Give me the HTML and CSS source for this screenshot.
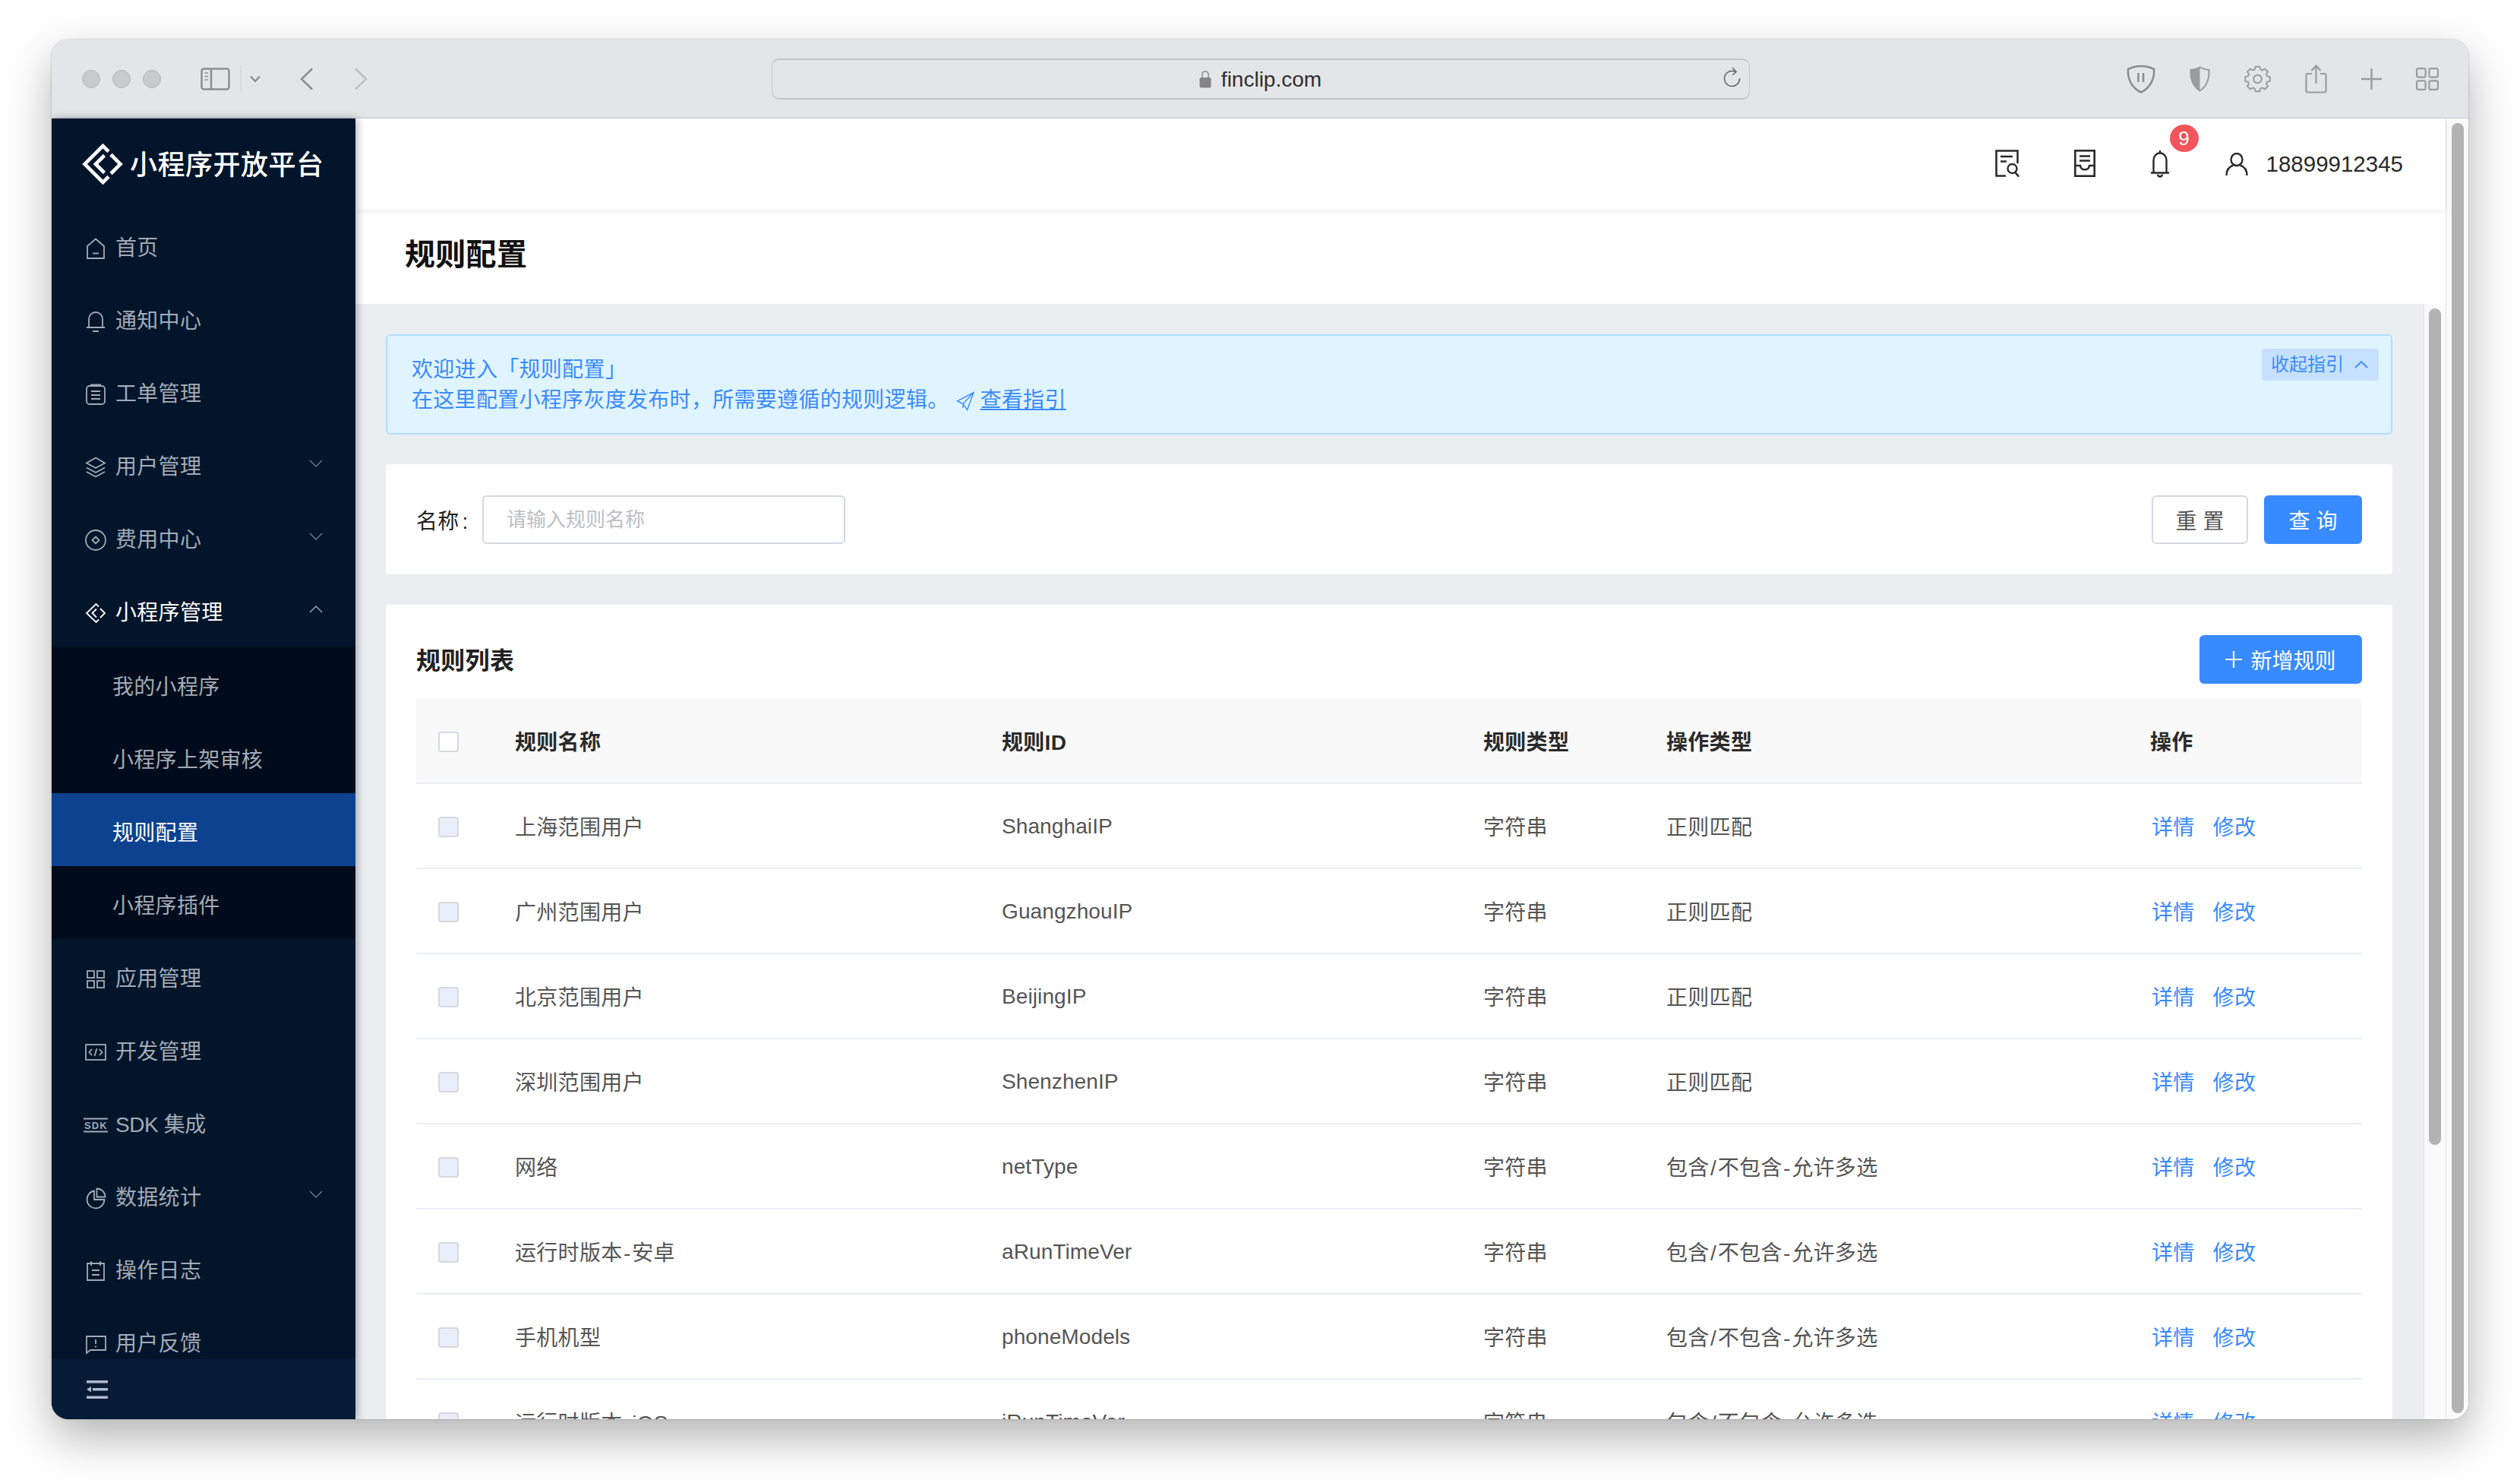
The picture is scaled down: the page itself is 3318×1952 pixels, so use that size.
FILE: index.html
```html
<!DOCTYPE html>
<html lang="zh-CN">
<head>
  <meta charset="utf-8">
  <title>规则配置</title>
  <link rel="stylesheet" href="styles.css">
</head>
<body>
<div class="window">
  <div class="titlebar">
    <div class="tb-left">
      <span class="light"></span><span class="light"></span><span class="light"></span>
      <svg class="tb-sidebar" width="80" height="38" viewBox="0 0 80 38" fill="none">
        <rect x="1.5" y="5.5" width="36" height="27" rx="3" stroke="#8d8e91" stroke-width="2.5"/>
        <path d="M14 5.5V32.5" stroke="#8d8e91" stroke-width="2.5"/>
        <path d="M5.5 11H10M5.5 15.5H10M5.5 20H10" stroke="#8d8e91" stroke-width="1.6"/>
        <path d="M53 1V37" stroke="#cfd0d3" stroke-width="1"/>
        <path d="M66 15.5L72 22L78 15.5" stroke="#8d8e91" stroke-width="2.4"/>
      </svg>
      <svg class="tb-back" width="18" height="30" viewBox="0 0 18 30" fill="none"><path d="M16 1.5L2 15L16 28.5" stroke="#8d8e91" stroke-width="2.6"/></svg>
      <svg class="tb-forward" width="18" height="30" viewBox="0 0 18 30" fill="none"><path d="M2 1.5L16 15L2 28.5" stroke="#c0c1c4" stroke-width="2.6"/></svg>
    </div>
    <div class="urlbar">
      <svg width="16" height="24" viewBox="0 0 16 24" fill="none"><path d="M4 11V6a4 4 0 0 1 8 0v5" stroke="#8a8a8c" stroke-width="1.6"/><rect x="0.5" y="10" width="15" height="13.5" rx="2" fill="#858587"/></svg>
      <span class="url-text">finclip.com</span>
      <svg class="url-reload" width="24" height="28" viewBox="0 0 24 28" fill="none"><path d="M16 6.5A10 10 0 1 0 21.5 15" stroke="#6a6a6c" stroke-width="1.6"/><path d="M12 1L17 6.5L12 11" stroke="#6a6a6c" stroke-width="1.6"/></svg>
    </div>
    <div class="tb-right">
      <svg width="38" height="38" viewBox="0 0 38 38" fill="none"><path d="M19 2C25 2 31 3.5 36 6C37 18 32 30 19 36.5C6 30 1 18 2 6C7 3.5 13 2 19 2Z" stroke="#8d8e91" stroke-width="2.6"/><path d="M15.5 11V23M22 11V23" stroke="#8d8e91" stroke-width="2.6"/></svg>
      <svg width="27" height="34" viewBox="0 0 27 34" fill="none"><path d="M13.5 1.5C17 3.5 21 4.5 25.5 5C26 17 22 27 13.5 32.5C5 27 1 17 1.5 5C6 4.5 10 3.5 13.5 1.5Z" stroke="#9a9b9e" stroke-width="2"/><path d="M13.5 1.5C10 3.5 6 4.5 1.5 5C1 17 5 27 13.5 32.5Z" fill="#9a9b9e"/></svg>
      <svg width="35" height="36" viewBox="0 0 36 36" fill="none" stroke="#9a9b9e" stroke-width="2" stroke-linejoin="round"><path d="M14.28 5.02L15.05 1.26H20.95L21.72 5.02L24.55 6.19L27.75 4.07L31.93 8.25L29.81 11.45L30.98 14.28L34.74 15.05V20.95L30.98 21.72L29.81 24.55L31.93 27.75L27.75 31.93L24.55 29.81L21.72 30.98L20.95 34.74H15.05L14.28 30.98L11.45 29.81L8.25 31.93L4.07 27.75L6.19 24.55L5.02 21.72L1.26 20.95V15.05L5.02 14.28L6.19 11.45L4.07 8.25L8.25 4.07L11.45 6.19Z"/><circle cx="18" cy="18" r="5.5"/></svg>
      <svg width="29" height="38" viewBox="0 0 29 38" fill="none"><path d="M9 12H3.5A2 2 0 0 0 1.5 14V34.5A2 2 0 0 0 3.5 36.500H25.500A2 2 0 0 0 27.500 34.500V14A2 2 0 0 0 25.500 12H20" stroke="#9a9b9e" stroke-width="2.200"/><path d="M14.500 25V2M8.500 8L14.500 1.500L20.500 8" stroke="#9a9b9e" stroke-width="2.200"/></svg>
      <svg width="27" height="28" viewBox="0 0 27 28" fill="none"><path d="M13.500 0V28M0 14H27" stroke="#9a9b9e" stroke-width="2.400"/></svg>
      <svg width="30" height="30" viewBox="0 0 30 30" fill="none" stroke="#9a9b9e" stroke-width="2.200"><rect x="1.100" y="1.100" width="11.500" height="11.500" rx="2"/><rect x="17.400" y="1.100" width="11.500" height="11.500" rx="2"/><rect x="1.100" y="17.400" width="11.500" height="11.500" rx="2"/><rect x="17.400" y="17.400" width="11.500" height="11.500" rx="2"/></svg>
    </div>
  </div>

  <div class="app">
    <aside class="sidebar">
      <div class="logo">
        <svg width="54" height="54" viewBox="0 0 54 54" fill="none" stroke="#fff" stroke-width="4.600">
          <path d="M35 10.500L27.500 3L3.500 27L27.500 51L35 43.500"/>
          <path d="M29.500 15.500L18 27L29.500 38.500"/>
          <path d="M38 14.500L50.500 27L38 39.500"/>
        </svg>
        <span>小程序开放平台</span>
      </div>
      <nav class="menu">
        <a class="menu-item">
          <svg class="mi" viewBox="0 0 28 28" fill="none"><path d="M3 11L14 1.500L25 11V27H3Z"/><path d="M10 20.500H18"/></svg>
          <span>首页</span>
        </a>
        <a class="menu-item">
          <svg class="mi" viewBox="0 0 28 28" fill="none"><path d="M5 22V11A9 9 0 0 1 23 11V22"/><path d="M2 22H26M10 27H18"/></svg>
          <span>通知中心</span>
        </a>
        <a class="menu-item">
          <svg class="mi" viewBox="0 0 28 28" fill="none"><rect x="2" y="3" width="24" height="24" rx="4"/><path d="M8 3V1.500H20V3M8 10H20M8 15H20M8 20H20"/></svg>
          <span>工单管理</span>
        </a>
        <a class="menu-item">
          <svg class="mi" viewBox="0 0 28 28" fill="none"><path d="M14 1.500L26 8.500L14 15L2 8.500Z"/><path d="M2 14.500L14 21L26 14.500M2 20L14 26.500L26 20"/></svg>
          <span>用户管理</span>
          <svg class="caret" viewBox="0 0 18 10" fill="none"><path d="M1 1L9 9L17 1"/></svg>
        </a>
        <a class="menu-item">
          <svg class="mi" viewBox="0 0 28 28" fill="none"><circle cx="14" cy="14" r="13"/><path d="M14 9.500L18.500 14L14 18.500L9.500 14Z"/></svg>
          <span>费用中心</span>
          <svg class="caret" viewBox="0 0 18 10" fill="none"><path d="M1 1L9 9L17 1"/></svg>
        </a>
        <a class="menu-item open">
          <svg class="mi" viewBox="0 0 28 28" fill="none"><path d="M18 5.500L14.500 2L2 14L14.500 26L18 22.500"/><path d="M15 8.500L9.500 14L15 19.500"/><path d="M20 8L26 14L20 20"/></svg>
          <span>小程序管理</span>
          <svg class="caret" viewBox="0 0 18 10" fill="none"><path d="M1 9L9 1L17 9"/></svg>
        </a>
        <div class="submenu">
          <a class="sub-item">我的小程序</a>
          <a class="sub-item">小程序上架审核</a>
          <a class="sub-item active">规则配置</a>
          <a class="sub-item">小程序插件</a>
        </div>
        <a class="menu-item">
          <svg class="mi" viewBox="0 0 28 28" fill="none"><rect x="3" y="3" width="9" height="9"/><rect x="16" y="3" width="9" height="9"/><rect x="3" y="16" width="9" height="9"/><rect x="16" y="16" width="9" height="9"/></svg>
          <span>应用管理</span>
        </a>
        <a class="menu-item">
          <svg class="mi" viewBox="0 0 28 28" fill="none"><rect x="1" y="4" width="26" height="20"/><path d="M9 10L5.500 14L9 18M19 10L22.500 14L19 18M15.500 9L12.500 19"/></svg>
          <span>开发管理</span>
        </a>
        <a class="menu-item">
          <svg class="mi mi-sdk" viewBox="0 0 32 28" fill="none"><path d="M0 5.500H32M0 22.500H32"/><text x="16" y="18.500" text-anchor="middle" textLength="30" class="sdk-text">SDK</text></svg>
          <span class="sdk-label">SDK 集成</span>
        </a>
        <a class="menu-item">
          <svg class="mi" viewBox="0 0 28 28" fill="none"><path d="M12 4.500A11.500 11.500 0 1 0 25.500 16H12Z"/><path d="M15.500 1.500A11 11 0 0 1 26.500 12.500H15.500Z"/></svg>
          <span>数据统计</span>
          <svg class="caret" viewBox="0 0 18 10" fill="none"><path d="M1 1L9 9L17 1"/></svg>
        </a>
        <a class="menu-item">
          <svg class="mi" viewBox="0 0 28 28" fill="none"><path d="M8 4H3V26H25V4H20M8 1V7M20 1V7M8 4H20M9 13H19M9 19H19"/></svg>
          <span>操作日志</span>
        </a>
        <a class="menu-item">
          <svg class="mi" viewBox="0 0 28 28" fill="none"><path d="M2 4H27V22H7L2 26Z"/><path d="M14 8V14M14 16.500V18.500"/></svg>
          <span>用户反馈</span>
        </a>
      </nav>
      <div class="collapse-bar">
        <svg width="28" height="24" viewBox="0 0 28 24"><path d="M0 0H28V3.500H0ZM8 10H28V13.500H8ZM0 20.500H28V24H0Z" fill="#b3bac6"/><path d="M0 11.800L6 8V15.500Z" fill="#b3bac6"/></svg>
      </div>
    </aside>

    <div class="main">
      <header class="topbar">
        <svg class="tp-icon" width="32" height="36" viewBox="0 0 32 36" fill="none"><path d="M14 34.500H1.500V1.500H29.500V18" stroke="#2a2a2a" stroke-width="2.600"/><path d="M7 9H23M7 15.500H15" stroke="#2a2a2a" stroke-width="2.600"/><circle cx="22.500" cy="25" r="6" stroke="#2a2a2a" stroke-width="2.400"/><path d="M26.500 30L31 35.500" stroke="#2a2a2a" stroke-width="2.600"/></svg>
        <svg class="tp-icon" width="28" height="36" viewBox="0 0 28 36" fill="none"><rect x="1.300" y="1.300" width="25.400" height="33.400" stroke="#2a2a2a" stroke-width="2.600"/><path d="M7 8.500H21M7 14.500H21" stroke="#2a2a2a" stroke-width="2.600"/><path d="M1.500 21H8C8.500 28 19.500 28 20 21H26.500" stroke="#2a2a2a" stroke-width="2.600"/></svg>
        <div class="bell">
          <svg width="26" height="36" viewBox="0 0 26 36" fill="none"><path d="M4.500 29V13A8.500 9.500 0 0 1 21.500 13V29" stroke="#2a2a2a" stroke-width="2.400"/><path d="M1 29.500H25" stroke="#2a2a2a" stroke-width="2.600"/><path d="M13 0V4" stroke="#2a2a2a" stroke-width="2.400"/><path d="M10 31.500A3 3 0 0 0 16 31.500" stroke="#2a2a2a" stroke-width="2.400"/></svg>
          <span class="badge">9</span>
        </div>
        <svg class="tp-user" width="30" height="30" viewBox="0 0 30 30" fill="none"><ellipse cx="15" cy="9" rx="7.500" ry="8" stroke="#2a2a2a" stroke-width="2.400"/><path d="M1.500 30C1.500 22 6 18 10.500 16.500M28.500 30C28.500 22 24 18 19.500 16.500" stroke="#2a2a2a" stroke-width="2.400"/></svg>
        <span class="user-name">18899912345</span>
      </header>
      <div class="page-head"><h1>规则配置</h1></div>

      <div class="page-body">
        <div class="content">
          <div class="guide">
            <div class="guide-text">
              <div>欢迎进入「规则配置」</div>
              <div>在这里配置小程序灰度发布时&#65292;所需要遵循的规则逻辑。<svg class="guide-send" width="24" height="26" viewBox="0 0 24 26" fill="none"><path d="M23 1.500L1.500 13L9 16.500L14.500 24.500Z"/><path d="M23 1.500L9 16.500V22"/></svg><a class="guide-link">查看指引</a></div>
            </div>
            <div class="guide-toggle">
              <span>收起指引</span>
              <svg width="18" height="10" viewBox="0 0 18 10" fill="none"><path d="M1 9L9 1L17 9" stroke="#3a8bff" stroke-width="1.800"/></svg>
            </div>
          </div>

          <div class="card filter">
            <label class="filter-label">名称<span class="colon">:</span></label>
            <div class="input">请输入规则名称</div>
            <div class="filter-actions">
              <button class="btn">重 置</button>
              <button class="btn btn-primary btn-query">查 询</button>
            </div>
          </div>

          <div class="card list">
            <div class="list-head">
              <h2>规则列表</h2>
              <button class="btn btn-primary btn-add">
                <svg width="22" height="22" viewBox="0 0 22 22" fill="none"><path d="M11 0V22M0 11H22" stroke="#fff" stroke-width="2.200"/></svg>
                <span>新增规则</span>
              </button>
            </div>
            <table class="rules">
              <colgroup>
                <col class="c-check"><col class="c-name"><col class="c-id"><col class="c-type"><col class="c-op"><col class="c-act">
              </colgroup>
              <thead>
                <tr><th><span class="check check-head"></span></th><th>规则名称</th><th>规则ID</th><th>规则类型</th><th>操作类型</th><th>操作</th></tr>
              </thead>
              <tbody>
                <tr><td><span class="check"></span></td><td>上海范围用户</td><td class="rule-id">ShanghaiIP</td><td>字符串</td><td>正则匹配</td><td><a class="act">详情</a><a class="act">修改</a></td></tr>
                <tr><td><span class="check"></span></td><td>广州范围用户</td><td class="rule-id">GuangzhouIP</td><td>字符串</td><td>正则匹配</td><td><a class="act">详情</a><a class="act">修改</a></td></tr>
                <tr><td><span class="check"></span></td><td>北京范围用户</td><td class="rule-id">BeijingIP</td><td>字符串</td><td>正则匹配</td><td><a class="act">详情</a><a class="act">修改</a></td></tr>
                <tr><td><span class="check"></span></td><td>深圳范围用户</td><td class="rule-id">ShenzhenIP</td><td>字符串</td><td>正则匹配</td><td><a class="act">详情</a><a class="act">修改</a></td></tr>
                <tr><td><span class="check"></span></td><td>网络</td><td class="rule-id">netType</td><td>字符串</td><td>包含<span class="sep">/</span>不包含<span class="sep">-</span>允许多选</td><td><a class="act">详情</a><a class="act">修改</a></td></tr>
                <tr><td><span class="check"></span></td><td>运行时版本<span class="sep">-</span>安卓</td><td class="rule-id">aRunTimeVer</td><td>字符串</td><td>包含<span class="sep">/</span>不包含<span class="sep">-</span>允许多选</td><td><a class="act">详情</a><a class="act">修改</a></td></tr>
                <tr><td><span class="check"></span></td><td>手机机型</td><td class="rule-id">phoneModels</td><td>字符串</td><td>包含<span class="sep">/</span>不包含<span class="sep">-</span>允许多选</td><td><a class="act">详情</a><a class="act">修改</a></td></tr>
                <tr><td><span class="check"></span></td><td>运行时版本<span class="sep">-</span>iOS</td><td class="rule-id">iRunTimeVer</td><td>字符串</td><td>包含<span class="sep">/</span>不包含<span class="sep">-</span>允许多选</td><td><a class="act">详情</a><a class="act">修改</a></td></tr>
              </tbody>
            </table>
          </div>
        </div>
        <div class="scroll scroll-inner"><div class="thumb"></div></div>
      </div>
    </div>
    <div class="scroll scroll-outer"><div class="thumb"></div></div>
  </div>
</div>
</body>
</html>
```
FILE: styles.css
```css
* {
    box-sizing: border-box;
}
html, body {
    margin: 0;
    height: 100%;
    background: #fff;
    overflow: hidden;
}
body {
    padding: 52px 68px 0;
    font-family: "Liberation Sans", "Noto Sans CJK SC", sans-serif;
    font-size: 28px;
    letter-spacing: 0.3px;
    color: #555;
}
h1, h2 {
    margin: 0;
}

/* browser window */
.window {
    width: 3182px;
    height: 1816px;
    display: flex;
    flex-direction: column;
    border-radius: 22px;
    overflow: hidden;
    box-shadow: 0 0 2px rgba(0, 0, 0, 0.35), 0 24px 60px rgba(0, 0, 0, 0.3);
}
.titlebar {
    height: 104px;
    flex-shrink: 0;
    display: flex;
    align-items: center;
    padding: 0 39px 0 40px;
    background: #e4e5e9;
    border-bottom: 1px solid #cbccce;
}
.tb-left {
    flex: 1;
    display: flex;
    align-items: center;
}
.light {
    width: 24px;
    height: 24px;
    margin-right: 16px;
    border-radius: 50%;
    background: #c8cbce;
    border: 1px solid #b4b6b9;
}
.tb-sidebar {
    margin-left: 36px;
}
.tb-back {
    margin-left: 51px;
}
.tb-forward {
    margin-left: 53px;
}
.urlbar {
    position: relative;
    width: 1288px;
    height: 54px;
    display: flex;
    align-items: center;
    justify-content: center;
    gap: 13px;
    border: 1px solid #c9cacd;
    border-top: 2px solid #c3c4c8;
    border-bottom: 2px solid #c3c4c8;
    border-radius: 10px;
}
.url-text {
    padding-top: 2px;
    color: #2f2f2f;
    font-size: 28px;
    letter-spacing: 0;
}
.url-reload {
    position: absolute;
    right: 10px;
    top: 9px;
}
.tb-right {
    flex: 1;
    display: flex;
    align-items: center;
    justify-content: flex-end;
    gap: 45px;
}

.app {
    flex: 1;
    min-height: 0;
    display: flex;
}

/* left menu */
.sidebar {
    position: relative;
    z-index: 2;
    width: 400px;
    flex-shrink: 0;
    display: flex;
    flex-direction: column;
    background: #02152b;
    box-shadow: 2px 0 10px rgba(0, 21, 41, 0.35);
}
.logo {
    height: 120px;
    flex-shrink: 0;
    display: flex;
    align-items: center;
    gap: 9px;
    padding-left: 40px;
    color: #fff;
    font-size: 36px;
    letter-spacing: 0.5px;
    font-weight: 500;
}
.logo span {
    padding-bottom: 4px;
}
.menu {
    flex: 1;
    min-height: 0;
    overflow: hidden;
}
.menu-item {
    height: 96px;
    display: flex;
    align-items: center;
    gap: 12px;
    padding: 5px 0 0 44px;
    color: #a3abb6;
    line-height: 40px;
}
.menu-item.open {
    color: #fff;
}
.mi {
    width: 28px;
    height: 28px;
    flex-shrink: 0;
    overflow: visible;
    stroke: currentColor;
    stroke-width: 1.8;
}
.mi-sdk {
    width: 32px;
    margin: 0 -2px 0 -2px;
}
.sdk-text {
    fill: currentColor;
    stroke: none;
    font-size: 13px;
    font-weight: bold;
    font-family: "Liberation Sans", sans-serif;
}
.sdk-label {
    letter-spacing: -0.4px;
}
.caret {
    width: 18px;
    height: 10px;
    margin: -10px 43px 0 auto;
    stroke: #6f7a89;
    stroke-width: 1.4;
}
.menu-item.open .caret {
    stroke: #a3abb6;
}
.submenu {
    margin-bottom: 2px;
    background: #000c1b;
}
.sub-item {
    height: 96px;
    display: flex;
    align-items: center;
    padding: 4px 0 0 80px;
    color: #a3abb6;
}
.sub-item.active {
    background: #0c4290;
    color: #fff;
}
.collapse-bar {
    height: 79px;
    flex-shrink: 0;
    display: flex;
    align-items: center;
    padding-left: 46px;
    background: #051b38;
}

.main {
    flex: 1;
    min-width: 0;
    display: flex;
    flex-direction: column;
    background: #fff;
}
.topbar {
    position: relative;
    z-index: 1;
    height: 120px;
    flex-shrink: 0;
    display: flex;
    align-items: center;
    justify-content: flex-end;
    padding-right: 56px;
    color: #2a2a2a;
    box-shadow: 0 2px 8px rgba(0, 21, 41, 0.08);
}
.tp-icon {
    margin: -3px 72px 0 0;
}
.bell {
    position: relative;
    height: 36px;
}
.badge {
    position: absolute;
    left: 26px;
    top: -34px;
    width: 38px;
    height: 36px;
    border-radius: 50%;
    background: #f2545b;
    color: #fff;
    font-size: 26px;
    letter-spacing: 0;
    line-height: 36px;
    text-align: center;
}
.tp-user {
    margin: 0 24px 0 73px;
}
.user-name {
    font-size: 29.5px;
    letter-spacing: 0;
}
.page-head {
    height: 124px;
    flex-shrink: 0;
    display: flex;
    align-items: center;
    padding: 0 0 12px 65px;
}
.page-head h1 {
    color: #111;
    font-size: 40px;
    font-weight: 700;
}

.page-body {
    flex: 1;
    min-height: 0;
    display: flex;
}
.content {
    flex: 1;
    min-width: 0;
    overflow: hidden;
    padding: 40px 41px 0 40px;
    background: #ebeef1;
}

/* guide banner */
.guide {
    height: 132px;
    display: flex;
    justify-content: space-between;
    align-items: flex-start;
    padding: 25px 16px 0 32px;
    border: 2px solid #aedfff;
    border-radius: 6px;
    background: #e0f4ff;
    color: #3a8bff;
    line-height: 40px;
}
.guide-send {
    margin: 0 8px 0 9px;
    vertical-align: -5px;
    stroke: #3a8bff;
    stroke-width: 1.400;
}
.guide-link {
    text-decoration: underline;
}
.guide-toggle {
    height: 42px;
    margin-top: -8px;
    display: flex;
    align-items: center;
    gap: 14px;
    padding: 0 14px 0 12px;
    border-radius: 4px;
    background: #c6e1ff;
    font-size: 24px;
    letter-spacing: 0;
}

.card {
    background: #fff;
    border-radius: 4px;
}
.filter {
    height: 145px;
    margin-top: 39px;
    display: flex;
    align-items: center;
    padding: 0 40px;
}
.filter-label {
    width: 87px;
    color: #222;
}
.colon {
    margin-left: 4px;
}
.input {
    width: 478px;
    height: 64px;
    padding-left: 30px;
    border: 2px solid #d5d8e0;
    border-radius: 6px;
    color: #bcbfc6;
    font-size: 26px;
    letter-spacing: 0;
    line-height: 60px;
}
.filter-actions {
    margin-left: auto;
    display: flex;
    gap: 21px;
}
.btn {
    width: 127px;
    height: 64px;
    padding: 0;
    border: 2px solid #d5d8e0;
    border-radius: 6px;
    background: #fff;
    color: #555;
    font: inherit;
    letter-spacing: 0;
}
.btn-primary {
    border: none;
    background: #388aff;
    color: #fff;
}
.btn-query {
    width: 129px;
}
.btn-add {
    width: 214px;
    display: flex;
    align-items: center;
    justify-content: center;
    gap: 11px;
}

.list {
    margin-top: 40px;
    padding: 40px 40px 0;
}
.list-head {
    height: 64px;
    display: flex;
    align-items: center;
    justify-content: space-between;
}
.list-head h2 {
    margin-bottom: 3px;
    color: #222;
    font-size: 32px;
    font-weight: 600;
}

/* rule table */
.rules {
    width: 2562px;
    margin-top: 20px;
    table-layout: fixed;
    border-collapse: collapse;
}
.c-check { width: 130px; }
.c-name { width: 641px; }
.c-id { width: 634px; }
.c-type { width: 241px; }
.c-op { width: 637px; }
.c-act { width: 279px; }
.rules th {
    height: 111px;
    padding: 0;
    border-bottom: 2px solid #e9edf5;
    background: #f9f9f9;
    color: #2a2a2a;
    font-weight: 600;
    text-align: left;
}
.rules td {
    height: 112px;
    padding: 0;
    border-bottom: 2px solid #e9edf5;
}
.rules .rule-id {
    padding-top: 2px;
    letter-spacing: 0.1px;
}
.sep {
    margin: 0 1.500px;
}
.check {
    display: block;
    width: 27px;
    height: 27px;
    margin: 3px 0 0 29px;
    border: 2px solid #d5d8e0;
    border-radius: 4px;
    background: #e8eefa;
}
.check-head {
    background: #fff;
}
.act {
    margin: 0 22px 0 2px;
    color: #388aff;
}

/* fake scrollbars */
.scroll {
    flex-shrink: 0;
    background: #fafafa;
    border-left: 1px solid #e3e3e3;
}
.thumb {
    width: 16px;
    border-radius: 8px;
    background: #b3b3b3;
}
.scroll-inner {
    width: 29px;
    padding: 6px 0 0 6px;
}
.scroll-inner .thumb {
    height: 1101px;
}
.scroll-outer {
    width: 30px;
    padding: 6px 0 0 7px;
}
.scroll-outer .thumb {
    height: 1698px;
}
```
